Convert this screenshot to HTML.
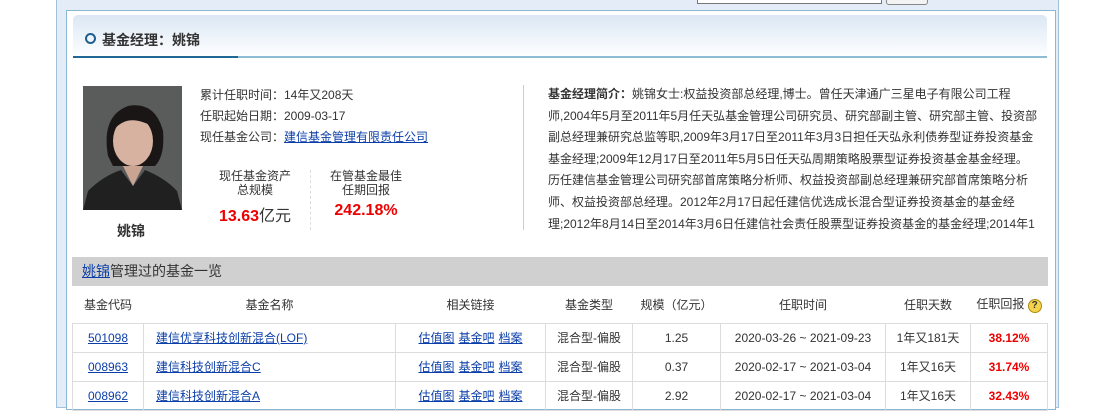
<!DOCTYPE html>
<html><head><meta charset="utf-8"><style>
*{margin:0;padding:0;box-sizing:border-box}
body{width:1120px;height:400px;overflow:hidden;background:#fff;font-family:"Liberation Sans","Noto Sans CJK SC",sans-serif;font-size:12px;color:#333;position:relative}
.abs{position:absolute}
a{color:#0b3ea8;text-decoration:underline}
.outer{left:56px;top:-2px;width:1003px;height:410px;background:#e4edf7;border:1px solid #9fc2dc}
.panel{left:66px;top:10px;width:990px;height:400px;background:#fff;border:1px solid #8ab8d2}
.hdr{left:73px;top:15px;width:974px;height:41px;border-radius:5px 5px 0 0;background:linear-gradient(#dbe7f4,#fdfeff)}
.ul1{left:73px;top:56px;width:974px;height:2px;background:#8ebcd4}
.ul2{left:73px;top:56px;width:165px;height:2px;background:#1f6896}
.t{font-size:14px;font-weight:bold;color:#333;left:102px;top:30px}
.circ{left:85px;top:33px;width:11px;height:11px;border:2px solid #1e5f8f;border-radius:50%}
table{border-collapse:collapse;position:absolute;left:72px;top:286px;width:976px}
td{border:1px solid #dcdcdc;text-align:center;height:29px;font-size:12px;color:#333}
tr.h td{border:none;border-bottom:1px solid #dcdcdc;height:37px}
.r{color:#e00;font-weight:bold}
.lk a{margin:0 2px}
</style></head><body>
<div class="abs outer"></div>
<div class="abs panel"></div>
<div class="abs" style="left:697px;top:-2px;width:185px;height:6px;border:1px solid #777;background:#fff"></div>
<div class="abs" style="left:886px;top:-2px;width:42px;height:7px;border:1px solid #888;border-radius:3px;background:#f3f3f3"></div>
<div class="abs hdr"></div>
<div class="abs ul1"></div><div class="abs ul2"></div>
<div class="abs circ"></div>
<div class="abs t">基金经理：姚锦</div>

<svg class="abs" style="left:83px;top:86px" width="99" height="124" viewBox="0 0 99 124">
<rect width="99" height="124" fill="#5a5c5c"/>
<path d="M25 70 Q18 30 45 20 Q72 15 80 45 Q82 70 72 80 L30 80Z" fill="#1a1616"/>
<ellipse cx="50" cy="55" rx="20" ry="25" fill="#d7b2a0"/>
<path d="M30 45 Q45 25 72 42 Q65 28 48 28 Q32 30 30 45Z" fill="#1a1616"/>
<path d="M0 124 L5 105 Q20 90 38 84 L50 100 L62 84 Q82 92 94 105 L99 124Z" fill="#202020"/>
<path d="M40 80 L50 100 L60 80Z" fill="#c9a493"/>
</svg>
<div class="abs" style="left:117px;top:221px;font-size:14px;font-weight:bold">姚锦</div>

<div class="abs" style="left:200px;top:85px;line-height:21px">累计任职时间：14年又208天<br>任职起始日期：2009-03-17<br>现任基金公司：<a>建信基金管理有限责任公司</a></div>
<div class="abs" style="left:210px;top:169px;width:90px;text-align:center;line-height:14px">现任基金资产<br>总规模</div>
<div class="abs" style="left:200px;top:202px;width:110px;text-align:center;font-size:16px"><b style="color:#e00">13.63</b>亿元</div>
<div class="abs" style="left:310px;top:170px;height:60px;border-left:1px dashed #ddd"></div>
<div class="abs" style="left:320px;top:169px;width:92px;text-align:center;line-height:14px">在管基金最佳<br>任期回报</div>
<div class="abs" style="left:316px;top:202px;width:100px;text-align:center;font-size:16px;color:#e00;font-weight:bold">242.18%</div>
<div class="abs" style="left:523px;top:85px;height:145px;border-left:1px solid #ccc"></div>
<div class="abs" style="left:548px;top:84px;width:490px;height:150px;overflow:hidden;line-height:21.6px;text-align:left"><b>基金经理简介：</b>姚锦女士:权益投资部总经理,博士。曾任天津通广三星电子有限公司工程师,2004年5月至2011年5月任天弘基金管理公司研究员、研究部副主管、研究部主管、投资部副总经理兼研究总监等职,2009年3月17日至2011年3月3日担任天弘永利债券型证券投资基金基金经理;2009年12月17日至2011年5月5日任天弘周期策略股票型证券投资基金基金经理。历任建信基金管理公司研究部首席策略分析师、权益投资部副总经理兼研究部首席策略分析师、权益投资部总经理。2012年2月17日起任建信优选成长混合型证券投资基金的基金经理;2012年8月14日至2014年3月6日任建信社会责任股票型证券投资基金的基金经理;2014年1月</div>

<div class="abs" style="left:72px;top:257px;width:976px;height:29px;background:#d0d0d0;font-size:14px;line-height:29px;padding-left:10px"><a>姚锦</a>管理过的基金一览</div>
<table>
<tr class="h"><td style="width:71px">基金代码</td><td style="width:252px">基金名称</td><td style="width:150px">相关链接</td><td style="width:87px">基金类型</td><td style="width:88px">规模（亿元）</td><td style="width:165px">任职时间</td><td style="width:85px">任职天数</td><td>任职回报 <span style="display:inline-block;width:14px;height:14px;border-radius:50%;background:#f3d34a;border:1px solid #b08a10;font-size:10px;line-height:12px;font-weight:bold">?</span></td></tr>
<tr><td><a>501098</a></td><td style="text-align:left;padding-left:12px"><a>建信优享科技创新混合(LOF)</a></td><td class="lk"><a>估值图</a><a>基金吧</a><a>档案</a></td><td>混合型-偏股</td><td>1.25</td><td>2020-03-26 ~ 2021-09-23</td><td>1年又181天</td><td class="r">38.12%</td></tr>
<tr><td><a>008963</a></td><td style="text-align:left;padding-left:12px"><a>建信科技创新混合C</a></td><td class="lk"><a>估值图</a><a>基金吧</a><a>档案</a></td><td>混合型-偏股</td><td>0.37</td><td>2020-02-17 ~ 2021-03-04</td><td>1年又16天</td><td class="r">31.74%</td></tr>
<tr><td><a>008962</a></td><td style="text-align:left;padding-left:12px"><a>建信科技创新混合A</a></td><td class="lk"><a>估值图</a><a>基金吧</a><a>档案</a></td><td>混合型-偏股</td><td>2.92</td><td>2020-02-17 ~ 2021-03-04</td><td>1年又16天</td><td class="r">32.43%</td></tr>
</table>
</body></html>
